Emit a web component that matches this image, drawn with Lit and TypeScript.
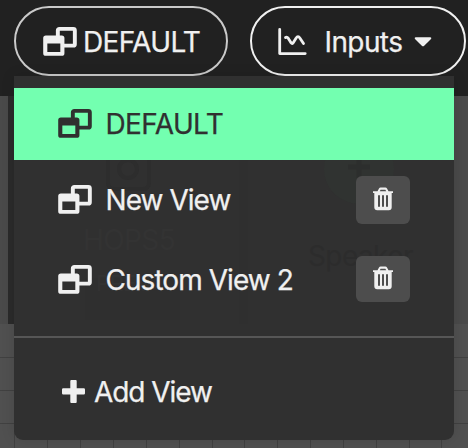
import { LitElement, html, css, svg } from "lit";
import { customElement, property } from "lit/decorators.js";

@customElement("view-icon")
class ViewIcon extends LitElement {
  static styles = css`
    :host { display: block; width: 34px; height: 29px; flex: none; }
    svg { display: block; }
  `;
  render() {
    return html`<svg width="34" height="29" viewBox="0 0 33 29" preserveAspectRatio="none" fill="none" stroke="currentColor" stroke-width="3.8">
      <path d="M14.4 9V3.4Q14.4 1.9 15.9 1.9H29.4Q30.9 1.9 30.9 3.4V17.2Q30.9 18.7 29.4 18.7H20"/>
      <path d="M2.8 8.5H18.2Q20.8 8.5 20.8 11.1V26.2Q20.8 28.8 18.2 28.8H2.8Q.2 28.8 .2 26.2V11.1Q.2 8.5 2.8 8.5ZM4.2 16.4V24.9H16.8V16.4Z" fill="currentColor" fill-rule="evenodd" stroke="none"/>
    </svg>`;
  }
}

@customElement("view-row")
class ViewRow extends LitElement {
  @property() label = "";
  @property({ type: Boolean }) removable = false;
  static styles = css`
    :host { display: flex; align-items: center; box-sizing: border-box; padding: 0 44px 0 44.3px; }
    view-icon { margin-top: -1px; }
    .label { flex: 1; margin-left: 13.2px; white-space: nowrap; }
    .remove { width: 54px; height: var(--remove-height, 48px); margin-bottom: var(--remove-gap, 0); padding: 0; border: 0; border-radius: 6px; background: #4d4d4d; color: #f0f0f0; display: grid; place-items: center; }
    svg { display: block; margin-top: -2px; }
  `;
  render() {
    return html`<view-icon></view-icon><span class="label">${this.label}</span>
      ${this.removable ? html`<button class="remove" aria-label="Delete view">
        <svg width="22" height="24" viewBox="0 0 22 24">
          <path d="M1 4.2H5.5L7 1.5Q7.5.6 8.6.6H13.4Q14.5.6 15 1.5L16.5 4.2H21V6H19.7V20.3Q19.7 23.3 16.7 23.3H5.3Q2.3 23.3 2.3 20.3V6H1ZM7.8 4.2H14.2L13.4 2.8H8.6ZM6 8.3V19.8H8V8.3ZM10 8.3V19.8H12V8.3ZM14 8.3V19.8H16V8.3Z" fill="currentColor" fill-rule="evenodd"/>
        </svg></button>` : ""}`;
  }
}

@customElement("app-root")
class AppRoot extends LitElement {
  static styles = css`
    :host { display: block; position: relative; width: 468px; height: 448px; overflow: hidden; background: #505050; color: #f0f0f0; font: 400 28px/34px Inter, "Liberation Sans", sans-serif; letter-spacing: -0.95px; -webkit-text-stroke: 0.25px currentColor; }
    .backdrop { position: absolute; inset: 0; display: block; }
    .bar { position: relative; display: flex; gap: 22px; height: 76px; padding: 6px 0 0 14px; box-sizing: border-box; }
    .pill { box-sizing: border-box; height: 70px; border: 2px solid #f0f0f0; border-radius: 35px; display: flex; align-items: center; background: #212121; white-space: nowrap; }
    .pill span { padding-top: 2px; }
    .view { width: 214px; padding-left: 27px; border-color: #cacaca; letter-spacing: -0.65px; }
    .view span { margin-left: 6px; }
    .inputs { width: 216px; padding-left: 26px; letter-spacing: -0.6px; }
    .inputs span { margin-left: 17.5px; }
    .inputs .caret { margin: 2px 0 0 11.5px; }
    .menu { position: relative; box-sizing: border-box; width: 440px; height: 364px; margin-left: 14px; padding-top: 12px; border-radius: 0 0 9px 9px; background: #303030; box-shadow: 0 0 14px rgba(0,0,0,.12); overflow: hidden; display: flex; flex-direction: column; }
    .ghost { position: absolute; inset: 0; letter-spacing: -0.6px; -webkit-text-stroke: 0; }
    view-row, .rule, .add { position: relative; flex: none; }
    view-row { height: 80px; }
    .active { height: 72px; background: #73ffb0; color: #303030; letter-spacing: -0.6px; }
    .last { --remove-height: 46px; --remove-gap: 2px; }
    .rule { height: 2px; margin-top: 16px; background: #565656; }
    .add { display: flex; align-items: center; height: 102px; padding: 6px 0 0 47.5px; box-sizing: border-box; }
    .add svg { margin-top: -2px; }
    .add span { margin-left: 9.5px; letter-spacing: -1.05px; }
  `;
  render() {
    const vlines = [14, 47, 80, 113, 146, 179, 212, 244, 277, 310, 343, 376, 409, 441];
    return html`
      <svg class="backdrop" width="468" height="448">
        <rect y="96" width="468" height="228" fill="#4a4a4a"/>
        <rect x="8" y="96" width="232" height="228" fill="#2b2b2b"/>
        <rect width="468" height="96" fill="#212121"/>
        ${vlines.map((x) => svg`<rect x=${x} y="324" width="1" height="124" fill="#414141"/>`)}
        ${[357, 390, 423].map((y) => svg`<rect y=${y} width="468" height="1" fill="#414141"/>`)}
      </svg>
      <div class="bar">
        <div class="pill view"><view-icon></view-icon><span>DEFAULT</span></div>
        <div class="pill inputs">
          <svg width="29" height="28" viewBox="0 0 29 28" fill="none" stroke="currentColor" stroke-linecap="round" stroke-linejoin="round">
            <path d="M1.7 2.5V26.6H27.2" stroke-width="2.8"/>
            <path d="M7.5 10.5Q9.5 9.5 11 12.5L13.2 16Q14.2 17.3 15.2 15.7L18 11.2Q20 8.2 22 11.2L25.5 16.5" stroke-width="2.8"/>
          </svg>
          <span>Inputs</span>
          <svg class="caret" width="18" height="10" viewBox="0 0 18 10"><path d="M1.5.2H16.5Q18 .7 17 1.9L10.2 8.7Q9 9.8 7.8 8.7L1 1.9Q0 .7 1.5.2Z" fill="currentColor"/></svg>
        </div>
      </div>
      <div class="menu">
        <svg class="ghost" width="440" height="364">
          <rect x="225" y="84" width="9" height="164" fill="#2f2f2f"/>
          <rect x="94" y="60" width="41" height="53" rx="6" fill="none" stroke="#2d2d2d" stroke-width="4"/>
          <circle cx="114" cy="93" r="9" fill="none" stroke="#2d2d2d" stroke-width="4"/>
          <circle cx="345" cy="93" r="35" fill="#303331"/>
          <path d="M334 91H356M345 80V102" stroke="#2c2e2d" stroke-width="5"/>
          <rect x="71" y="202" width="95" height="42" fill="#2f2f2f"/>
          <text x="69" y="174" fill="#333333">HOPS5</text>
          <text x="82" y="215" font-size="22" fill="#333333">PREV</text>
          <text x="294" y="190" fill="#2c2c2c">Speaker</text>
        </svg>
        <view-row class="active" label="DEFAULT"></view-row>
        <view-row label="New View" removable></view-row>
        <view-row class="last" label="Custom View 2" removable></view-row>
        <div class="rule"></div>
        <div class="add">
          <svg width="23" height="23" viewBox="0 0 23 23"><path d="M9.3 0H13.7Q14.7 0 14.7 1V8.3H21.8Q23 8.3 23 9.5V13.3Q23 14.5 21.8 14.5H14.7V22Q14.7 23 13.7 23H9.3Q8.3 23 8.3 22V14.5H1.2Q0 14.5 0 13.3V9.5Q0 8.3 1.2 8.3H8.3V1Q8.3 0 9.3 0Z" fill="currentColor"/></svg>
          <span>Add View</span>
        </div>
      </div>`;
  }
}
